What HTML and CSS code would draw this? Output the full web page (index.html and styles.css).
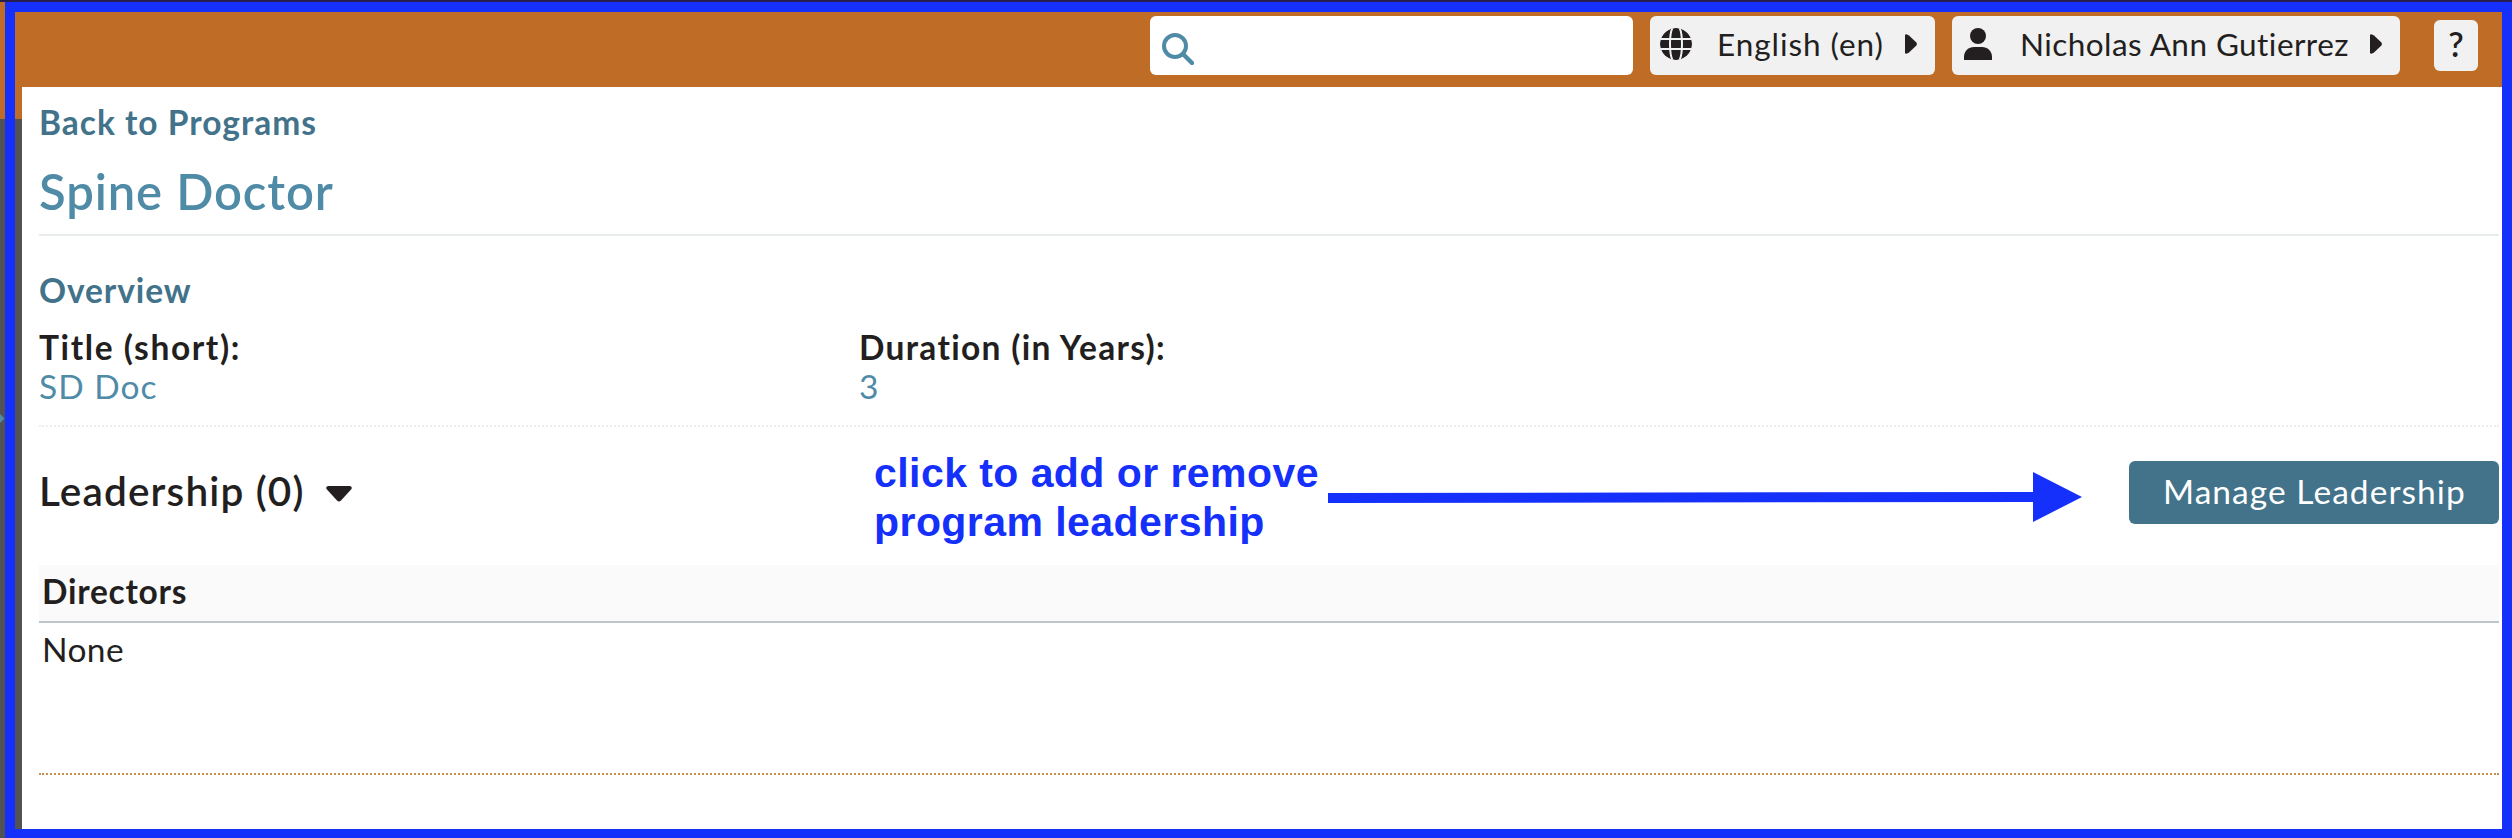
FILE: index.html
```
<!DOCTYPE html>
<html lang="en">
<head>
<meta charset="utf-8">
<title>Spine Doctor</title>
<link rel="stylesheet" href="styles.css">
</head>
<body>
<div class="app">
  <header class="topbar">
    <div class="search">
      <svg class="icon-search" viewBox="0 0 32 32"><circle cx="13" cy="13" r="11" fill="none" stroke="#4f8ba7" stroke-width="4"/><path d="M21 21L30 30" stroke="#4f8ba7" stroke-width="4.4" stroke-linecap="round"/></svg>
    </div>
    <button class="pill lang">
      <svg class="icon-globe" viewBox="0 0 32 32"><circle cx="16" cy="16" r="16" fill="#231f20"/><g fill="none" stroke="#f1f1f1" stroke-width="2"><path d="M0 11H32M0 21H32"/><path d="M13 -1C9 5 9 27 13 33M19 -1C23 5 23 27 19 33"/></g></svg>
      <span class="lang-text">English (en)</span>
      <svg class="icon-right" viewBox="0 0 12 20"><path d="M0 1.5Q0 0 2 .4L4 1.6L11.4 8.6Q12.4 10 11.4 11.4L4 18.4L2 19.6Q0 20 0 18.5Z" fill="#231f20"/></svg>
    </button>
    <button class="pill user">
      <svg class="icon-user" viewBox="0 0 28 32"><circle cx="14" cy="8" r="8" fill="#231f20"/><path d="M0 32V29C0 23 4.500 19 10 19H18C23.500 19 28 23 28 29V32Z" fill="#231f20"/></svg>
      <span class="user-text">Nicholas Ann Gutierrez</span>
      <svg class="icon-right" viewBox="0 0 12 20"><path d="M0 1.5Q0 0 2 .4L4 1.6L11.4 8.6Q12.4 10 11.4 11.4L4 18.4L2 19.6Q0 20 0 18.5Z" fill="#231f20"/></svg>
    </button>
    <button class="help">?</button>
  </header>
  <main class="content">
    <a class="back">Back to Programs</a>
    <h1 class="title">Spine Doctor</h1>
    <section class="overview">
      <h2 class="overview-head">Overview</h2>
      <div class="fields">
        <div class="field"><div class="label label-title">Title (short):</div><div class="value">SD Doc</div></div>
        <div class="field"><div class="label">Duration (in Years):</div><div class="value">3</div></div>
      </div>
    </section>
    <section class="leadership">
      <div class="lead-head">
        <h3 class="lead-title">Leadership (0)</h3>
        <svg class="icon-down" viewBox="0 0 26 16"><path d="M2 0H24Q26.500 .6 25.500 3L15 14.500Q13 16.500 11 14.500L.5 3Q-.5 .6 2 0Z" fill="#231f20"/></svg>
        <button class="manage">Manage Leadership</button>
      </div>
      <div class="table-head">Directors</div>
      <div class="table-row">None</div>
    </section>
  </main>
  <div class="note">click to add or remove<br>program leadership</div>
  <svg class="arrow" viewBox="0 0 754 50"><path d="M0 21L705 20V0L754 25L705 50V30L0 31Z" fill="#1430fa"/></svg>
  <div class="marker"></div>
  <div class="frame"></div>
</div>
</body>
</html>
```
FILE: styles.css
```
* { box-sizing: border-box; }
body { margin: 0; font-family: Lato, "Open Sans", sans-serif; color: #231f20; }
h1, h2, h3 { margin: 0; font-weight: 700; }
svg { display: block; flex: none; overflow: hidden; }
button { border: 0; margin: 0; padding: 0; font: inherit; color: inherit; text-align: left; white-space: nowrap; }
.app {
  position: relative; width: 2512px; height: 838px; overflow: hidden;
  background: linear-gradient(#281d50 2px, #bf6c26 2px, #bf6c26 119px, #525252 119px);
}
.topbar { display: flex; height: 87px; padding: 16px 34px 0 1150px; background: linear-gradient(#281d50 2px, #bf6c26 2px); font-size: 31.5px; line-height: 40px; }
.search { width: 483px; height: 59px; border-radius: 6px; background: #fff; padding: 17px 0 0 12px; }
.icon-search { width: 32px; height: 32px; }
.pill { display: flex; height: 59px; border-radius: 6px; background: #f1f1f1; margin-left: 17px; padding-top: 8px; }
.lang { width: 285px; padding-left: 10px; }
.icon-globe { width: 32px; height: 32px; margin: 4px 25px 0 0; border-radius: 50%; }
.lang-text { width: 165px; letter-spacing: .95px; }
.icon-right { width: 12px; height: 20px; margin: 10px 0 0 23px; }
.user { width: 448px; padding-left: 12px; }
.icon-user { width: 28px; height: 32px; margin: 4px 28px 0 0; }
.user-text { width: 327px; letter-spacing: .45px; }
.help { width: 44px; height: 51px; margin: 4px 0 0 34px; border-radius: 6px; background: #f1f1f1; text-align: center; font-size: 34px; font-weight: 600; padding-bottom: 3px; }
.content { margin-left: 22px; height: 742px; padding: 15px 13px 0 17px; background: #fff; font-size: 33.5px; line-height: 40px; }
.back { display: block; height: 58px; color: #42738a; font-weight: 700; letter-spacing: 1px; }
.title { height: 76px; padding-top: 1px; border-bottom: 2px solid #e8ecec; color: #4f8ba7; font-size: 49px; line-height: 60px; font-weight: 600; letter-spacing: .9px; }
.overview { height: 191px; padding-top: 34px; border-bottom: 2px dotted #ededed; }
.overview-head { height: 57px; font-size: 33.5px; color: #42738a; letter-spacing: .9px; }
.fields { display: flex; }
.field { width: 820px; }
.label { height: 39px; font-weight: 700; letter-spacing: 1.3px; }
.label-title { letter-spacing: 1.6px; }
.value { color: #4f8ba7; letter-spacing: 1px; }
.leadership { height: 348px; border-bottom: 2px dotted #c98e52; padding-top: 34px; }
.lead-head { display: flex; height: 104px; }
.lead-title { width: 287px; padding-top: 5px; font-size: 40.5px; line-height: 50px; font-weight: 600; letter-spacing: 1.15px; white-space: nowrap; }
.icon-down { width: 26px; height: 16px; margin-top: 25px; }
.manage { width: 370px; height: 63px; margin-left: auto; padding: 0 0 3px 34px; border-radius: 6px; background: #42738a; color: #fff; letter-spacing: 1.05px; }
.table-head { height: 58px; padding: 6px 0 0 3px; background: #fafafa; border-bottom: 2px solid #bdc5cb; font-weight: 700; letter-spacing: .75px; }
.table-row { padding: 6px 0 0 3px; letter-spacing: .4px; }
.note { position: absolute; left: 874px; top: 449px; font: 700 41px/49px "Liberation Sans", Arial, sans-serif; color: #1430fa; letter-spacing: .44px; white-space: nowrap; }
.arrow { position: absolute; left: 1328px; top: 472px; width: 754px; height: 50px; }
.marker { position: absolute; left: -4px; top: 415px; width: 7px; height: 7px; transform: rotate(45deg); background: #4f8ba7; }
.frame { position: absolute; left: 5px; top: 2px; width: 2507px; height: 836px; border: 10px solid #1430fa; border-bottom-width: 9px; }
```
